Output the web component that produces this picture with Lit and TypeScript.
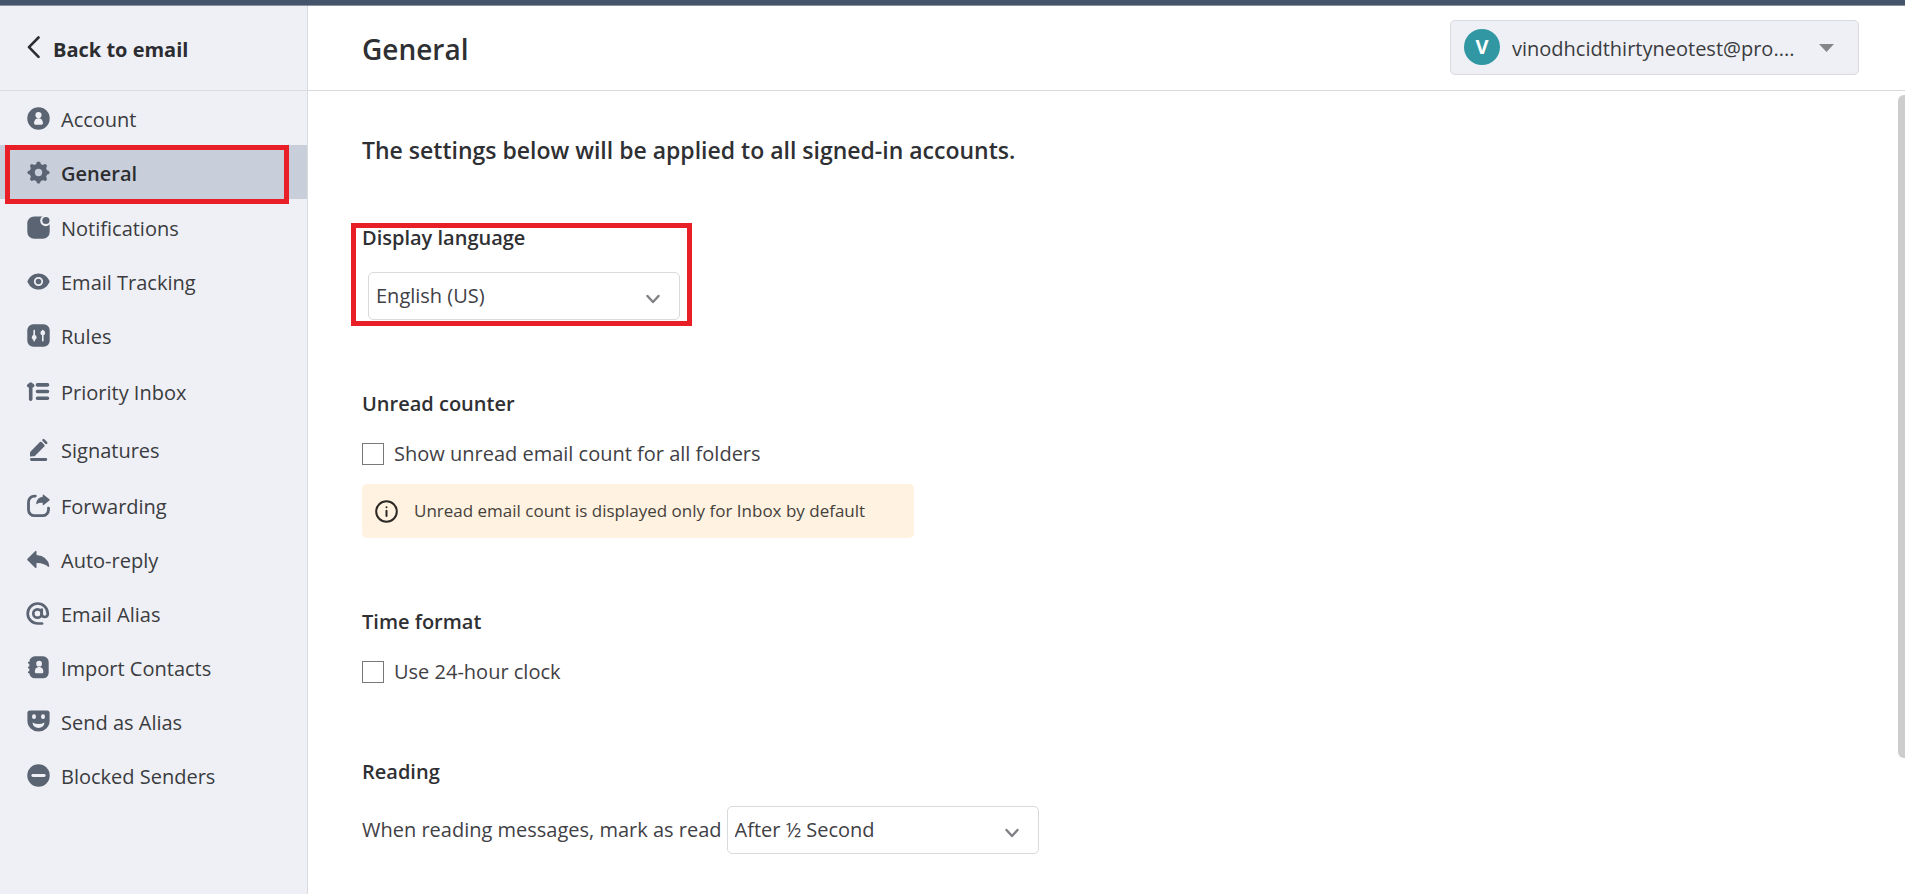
import { LitElement, html, svg, css, nothing } from "lit";
import { customElement, property, state } from "lit/decorators.js";
import { classMap } from "lit/directives/class-map.js";

const icons = {
  account: svg`<circle cx="12" cy="12" r="11.2"/><circle class="cut" cx="12" cy="8.6" r="3.1"/><path class="cut" d="M7.6 16.2a4.4 4.4 0 0 1 8.8 0v.6a1.4 1.4 0 0 1-1.4 1.4H9a1.4 1.4 0 0 1-1.4-1.4z"/>`,
  general: svg`<circle class="line" cx="12" cy="12" r="6.2" stroke-width="5"/>${[0, 45, 90, 135, 180, 225, 270, 315].map(
    (angle) => svg`<path transform="rotate(${angle} 12 12)" d="M9 5.2 10.4 1.8q.5-.9 1.6-.9t1.6.9L15 5.2z"/>`
  )}`,
  notifications: svg`<rect x=".8" y="1" width="22.4" height="22.2" rx="6.8"/><circle class="cut" cx="19.2" cy="5.2" r="5.5"/><circle cx="19.4" cy="5" r="3.6"/>`,
  tracking: svg`<path d="M.8 12C3 6.700 7 3.900 12 3.900S21 6.700 23.200 12C21 17.300 17 20.100 12 20.100S3 17.300.8 12z"/><circle class="hole" cx="12" cy="12" r="3.700" stroke-width="1.800"/>`,
  rules: svg`<rect x=".8" y=".8" width="22.400" height="22.400" rx="6"/><path class="hole" stroke-width="1.600" d="M7.700 7v10.200M16.300 7v10.200"/><circle class="cut" cx="7.700" cy="14" r="2.400"/><circle class="cut" cx="16.300" cy="9.400" r="2.400"/>`,
  priority: svg`<path class="line" stroke-width="3.600" d="M4.200 19.800V5M2.200 6.200 4.200 4.600l2 1.600M11 5.400h10M11 12h10M11 18.700h10"/>`,
  signatures: svg`<path class="line" stroke-width="2.800" d="M4.900 22h14.400"/><path d="M3.500 19v-3.600q0-.8.600-1.400L13.400 4.600q.9-.9 1.800 0l2.600 2.600q.9.900 0 1.800L8.600 18.200q-.6.600-1.400.6z"/><path class="line" stroke-width="2.600" d="M17 2.600 19.700 5.300"/>`,
  forwarding: svg`<path class="line" stroke-width="2.800" d="M8.800 2.600H8a6 6 0 0 0-6 6v7.600a6 6 0 0 0 6 6h8a6 6 0 0 0 6-6v-1.600"/><path d="M16.200 3.300V1.600q0-1.200 1-.4l5.700 4.500q.7.600 0 1.200l-5.700 4.500q-1 .7-1-.5V9.300q-3.800-.3-5.700 1.300-.9.600-.8-.5.700-6.200 6.500-6.800z"/>`,
  autoReply: svg`<path d="M10 7.500V4.400q0-1.700-1.400-.6L1 11.200q-.7.800 0 1.600l7.600 7.400q1.400 1.100 1.400-.6v-4q6.700-.4 11.400 3.500 1.500 1 1.300-.8Q21.400 8.700 10 7.500z"/>`,
  alias: svg`<g class="line" stroke-width="2.700"><circle cx="11" cy="12" r="4.200"/><path d="M15.200 8v5.200a3.100 3.100 0 0 0 6 0V12A10 10 0 1 0 11.200 22h4.400"/></g>`,
  contacts: svg`<rect x="2.800" y=".8" width="19.400" height="22" rx="5.600"/><path class="line" stroke-width="2" d="M2.400 7.300h1.400M2.400 12h1.400M2.400 16.700h1.400"/><circle class="cut" cx="12.600" cy="8.200" r="2.900"/><path class="cut" d="M8.400 15.800a4.200 4.200 0 0 1 8.400 0v.6a1.300 1.300 0 0 1-1.300 1.300H9.700a1.300 1.300 0 0 1-1.300-1.300z"/>`,
  sendAs: svg`<path d="M.9 3.600A2.500 2.500 0 0 1 3.400 1.100h17.200a2.500 2.500 0 0 1 2.500 2.500v8A11.100 10.500 0 0 1 .9 11.600z"/><ellipse class="cut" cx="7.500" cy="7.200" rx="2" ry="2.400"/><ellipse class="cut" cx="16.500" cy="7.200" rx="2" ry="2.400"/><path class="cut" d="M5.900 13q6.100 3 12.200 0-.8 5.400-6.100 5.400T5.900 13z"/>`,
  blocked: svg`<circle cx="12" cy="12" r="11.200"/><path class="hole" stroke-width="2.800" d="M6.300 12h11.400"/>`,
};

type IconName = keyof typeof icons;

interface NavEntry {
  icon: IconName;
  label: string;
  tall?: boolean;
}

const entries: NavEntry[] = [
  { icon: "account", label: "Account" },
  { icon: "general", label: "General" },
  { icon: "notifications", label: "Notifications" },
  { icon: "tracking", label: "Email Tracking" },
  { icon: "rules", label: "Rules" },
  { icon: "priority", label: "Priority Inbox", tall: true },
  { icon: "signatures", label: "Signatures", tall: true },
  { icon: "forwarding", label: "Forwarding" },
  { icon: "autoReply", label: "Auto-reply" },
  { icon: "alias", label: "Email Alias" },
  { icon: "contacts", label: "Import Contacts" },
  { icon: "sendAs", label: "Send as Alias" },
  { icon: "blocked", label: "Blocked Senders" },
];

@customElement("settings-nav")
export class SettingsNav extends LitElement {
  static styles = css`
    :host { display: block; background: #eff0f5; border-right: 1px solid #d9dadd; }
    .back {
      display: flex; align-items: center; gap: 12px; box-sizing: border-box; height: 85px;
      padding-left: 27px; border-bottom: 1px solid #d9dadd;
      color: #2c2d30; font-weight: 700; text-decoration: none;
    }
    .chevron { width: 14px; height: 24px; fill: none; stroke: #2c2d30; stroke-width: 2.6; stroke-linecap: round; stroke-linejoin: round; }
    .list { margin: 0; padding: 0; list-style: none; }
    .item { position: relative; }
    .item.current { margin-bottom: 1px; }
    .link {
      --surface: #eff0f5;
      display: flex; align-items: center; gap: 11px; height: 54px; padding-left: 27px;
      background: var(--surface); color: #3a3c40; text-decoration: none;
    }
    .link.tall { height: 58px; }
    .link.current { --surface: #c8cfdb; color: #2c2d30; font-weight: 600; }
    .label { padding-top: 3px; }
    .icon { width: 23px; height: 23px; fill: #5b6473; }
    .icon .cut { fill: var(--surface); }
    .icon .line { fill: none; stroke: #5b6473; stroke-linecap: round; stroke-linejoin: round; }
    .icon .hole { fill: none; stroke: var(--surface); stroke-linecap: round; }
    .highlight {
      position: absolute; z-index: 1; top: 0; left: 5px; right: 18px; bottom: -5px;
      border: 5px solid #e81f27; pointer-events: none;
    }
  `;
  @property() current = "General";

  render() {
    return html`
      <a class="back" href="#">
        <svg class="chevron" viewBox="0 0 14 24" aria-hidden="true"><path d="M11.500 1.500 2 11.200l9.500 9.700"/></svg>
        <span class="label">Back to email</span>
      </a>
      <nav aria-label="Settings">
        <ul class="list">
          ${entries.map((entry) => {
            const current = entry.label === this.current;
            return html`<li class=${classMap({ item: true, current })}>
              <a href="#" class=${classMap({ link: true, tall: !!entry.tall, current })} aria-current=${current ? "page" : nothing}>
                <svg class="icon" viewBox="0.5 0.5 23 23" overflow="visible" aria-hidden="true">${icons[entry.icon]}</svg>
                <span class="label">${entry.label}</span>
              </a>
              ${current ? html`<span class="highlight"></span>` : nothing}
            </li>`;
          })}
        </ul>
      </nav>
    `;
  }
}

@customElement("settings-select")
export class SettingsSelect extends LitElement {
  static styles = css`
    :host { display: flex; align-items: center; flex-wrap: wrap; column-gap: 5px; }
    :host([stacked]) { flex-direction: column; align-items: flex-start; row-gap: 20px; }
    .caption { color: #3f4145; }
    :host([stacked]) .caption { color: #2f3033; font-weight: 600; }
    .field { display: grid; align-items: center; width: 312px; }
    :host([stacked]) .field { margin-left: 6px; }
    .control {
      grid-area: 1 / 1; box-sizing: border-box; width: 100%; height: 48px; margin: 0; padding: 0 44px 0 7px;
      appearance: none; border: 1px solid #d9dadd; border-radius: 5px; background: #fff;
      color: #3f4145; font: inherit;
    }
    .arrow {
      grid-area: 1 / 1; justify-self: end; width: 14px; height: 10px; margin: 6px 20px 0 0;
      fill: none; stroke: #808184; stroke-width: 2.4; stroke-linecap: round; stroke-linejoin: round; pointer-events: none;
    }
  `;
  @property() label = "";
  @property({ attribute: false }) options: string[] = [];

  render() {
    return html`
      <label class="caption" for="control">${this.label}</label>
      <div class="field">
        <select class="control" id="control">${this.options.map((option) => html`<option>${option}</option>`)}</select>
        <svg class="arrow" viewBox="0 0 14 10" aria-hidden="true"><path d="m1.500 2 5.500 6 5.500-6"/></svg>
      </div>
    `;
  }
}

@customElement("app-root")
export class AppRoot extends LitElement {
  static styles = css`
    :host {
      display: flex; flex-direction: column; box-sizing: border-box; height: 100vh; overflow: hidden;
      border-top: 5px solid #44546a; background: #fff; color: #3f4145;
      font: 400 20px/28px "Open Sans", "Noto Sans", sans-serif;
    }
    .shell { display: grid; grid-template-columns: 308px minmax(0, 1fr); flex: 1; min-height: 0; border-top: 1px solid #8d90a0; }
    .page { display: flex; flex-direction: column; min-height: 0; }
    .header {
      display: flex; align-items: center; justify-content: space-between; box-sizing: border-box; height: 85px; flex: none;
      padding: 0 46px 2px 54px; border-bottom: 1px solid #d9dadd;
    }
    .title { margin: 0; padding-top: 4px; color: #2f3033; font-size: 28px; line-height: 36px; font-weight: 600; }
    .account {
      display: flex; align-items: center; box-sizing: border-box; width: 409px; height: 55px; padding: 0 24px 0 13px;
      border: 1px solid #d9dadd; border-radius: 5px; background: #eff0f5; color: #3a3c40; font: inherit; text-align: left;
    }
    .avatar {
      display: grid; place-items: center; width: 36px; height: 36px; margin-right: 12px; border-radius: 50%;
      background: #3097a3; color: #fff; font-weight: 700;
    }
    .address { flex: 1; min-width: 0; padding-top: 3px; overflow: hidden; white-space: nowrap; }
    .caret { width: 15px; height: 8px; margin-top: 2px; fill: #858689; }
    .body { display: flex; flex: 1; min-height: 0; overflow: hidden; }
    .content { flex: 1; min-width: 0; padding: 43px 40px 0 54px; }
    .intro { margin: 0 0 58px; color: #2f3033; font-size: 23px; line-height: 32px; font-weight: 600; }
    .groups { display: flex; flex-direction: column; gap: 70px; }
    .group { position: relative; }
    .heading { margin: 0 0 20px; color: #2f3033; font-size: 20px; line-height: 28px; font-weight: 600; }
    .check { display: flex; align-items: center; gap: 10px; height: 32px; }
    .box {
      appearance: none; box-sizing: border-box; width: 22px; height: 22px; margin: 0;
      border: 1px solid #77787b; background: #fff;
    }
    .box:checked { background: #3097a3; }
    .note {
      display: flex; align-items: center; gap: 16px; box-sizing: border-box; width: 552px; max-width: 100%; min-height: 54px;
      margin: 14px 0 0; padding: 0 13px; border-radius: 5px; background: #fff2e0; color: #45413c; font-size: 17px;
    }
    .info { width: 23px; height: 23px; flex: none; fill: none; stroke: #2c2927; stroke-width: 2; stroke-linecap: round; }
    .highlight {
      position: absolute; top: -1px; left: -11px; width: 331px; bottom: -6px;
      border: 5px solid #e81f27; pointer-events: none;
    }
    .rail { flex: none; width: 7px; padding-top: 4px; }
    .thumb { height: 83%; border-radius: 6px 0 0 6px; background: #cdcdcd; }
  `;
  @state() private current = "General";

  private checkbox(id: string, label: string) {
    return html`<div class="check"><input class="box" type="checkbox" id=${id}><label for=${id}>${label}</label></div>`;
  }

  render() {
    return html`
      <div class="shell">
        <settings-nav .current=${this.current}></settings-nav>
        <div class="page">
          <header class="header">
            <h1 class="title">${this.current}</h1>
            <button class="account" type="button" aria-haspopup="listbox">
              <span class="avatar">V</span>
              <span class="address">vinodhcidthirtyneotest@pro....</span>
              <svg class="caret" viewBox="0 0 15 8" aria-hidden="true"><path d="M0 0h15L7.500 8z"/></svg>
            </button>
          </header>
          <div class="body">
            <main class="content">
              <p class="intro">The settings below will be applied to all signed-in accounts.</p>
              <div class="groups">
                <section class="group">
                  <settings-select stacked label="Display language" .options=${["English (US)"]}></settings-select>
                  <span class="highlight"></span>
                </section>
                <section class="group">
                  <h2 class="heading">Unread counter</h2>
                  ${this.checkbox("unread", "Show unread email count for all folders")}
                  <p class="note">
                    <svg class="info" viewBox="0 0 23 23" aria-hidden="true"><circle cx="11.500" cy="11.500" r="10.300"/><path d="M11.500 10.700v5.300M11.500 7.200v.1"/></svg>
                    Unread email count is displayed only for Inbox by default
                  </p>
                </section>
                <section class="group">
                  <h2 class="heading">Time format</h2>
                  ${this.checkbox("clock", "Use 24-hour clock")}
                </section>
                <section class="group">
                  <h2 class="heading">Reading</h2>
                  <settings-select label="When reading messages, mark as read" .options=${["After ½ Second"]}></settings-select>
                </section>
              </div>
            </main>
            <div class="rail" aria-hidden="true"><div class="thumb"></div></div>
          </div>
        </div>
      </div>
    `;
  }
}
